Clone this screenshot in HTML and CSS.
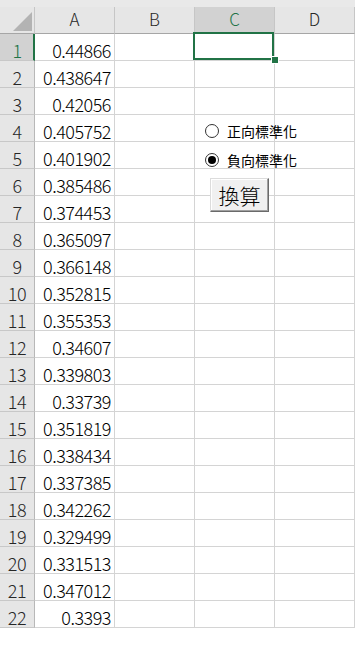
FILE: index.html
```html
<!DOCTYPE html>
<html>
<head>
<meta charset="utf-8">
<link rel="stylesheet" href="styles.css">
</head>
<body>
<div class="sheet">
  <div class="band"></div>
  <div class="grid">
    <div class="corner"><svg width="19" height="19" viewBox="0 0 19 19"><polygon points="19,0 19,19 0,19" fill="#b3b3b3"/></svg></div>
    <div class="colhead">A</div>
    <div class="colhead">B</div>
    <div class="colhead sel">C</div>
    <div class="colhead">D</div>

    <div class="rh sel">1</div><div class="c n">0.44866</div><div class="c"></div><div class="c active"><div class="selbox"><span class="handle"></span></div></div><div class="c"></div>
    <div class="rh">2</div><div class="c n">0.438647</div><div class="c"></div><div class="c"></div><div class="c"></div>
    <div class="rh">3</div><div class="c n">0.42056</div><div class="c"></div><div class="c"></div><div class="c"></div>
    <div class="rh">4</div><div class="c n">0.405752</div><div class="c"></div><div class="c"></div><div class="c"></div>
    <div class="rh">5</div><div class="c n">0.401902</div><div class="c"></div><div class="c"></div><div class="c"></div>
    <div class="rh">6</div><div class="c n">0.385486</div><div class="c"></div><div class="c"></div><div class="c"></div>
    <div class="rh">7</div><div class="c n">0.374453</div><div class="c"></div><div class="c"></div><div class="c"></div>
    <div class="rh">8</div><div class="c n">0.365097</div><div class="c"></div><div class="c"></div><div class="c"></div>
    <div class="rh">9</div><div class="c n">0.366148</div><div class="c"></div><div class="c"></div><div class="c"></div>
    <div class="rh">10</div><div class="c n">0.352815</div><div class="c"></div><div class="c"></div><div class="c"></div>
    <div class="rh">11</div><div class="c n">0.355353</div><div class="c"></div><div class="c"></div><div class="c"></div>
    <div class="rh">12</div><div class="c n">0.34607</div><div class="c"></div><div class="c"></div><div class="c"></div>
    <div class="rh">13</div><div class="c n">0.339803</div><div class="c"></div><div class="c"></div><div class="c"></div>
    <div class="rh">14</div><div class="c n">0.33739</div><div class="c"></div><div class="c"></div><div class="c"></div>
    <div class="rh">15</div><div class="c n">0.351819</div><div class="c"></div><div class="c"></div><div class="c"></div>
    <div class="rh">16</div><div class="c n">0.338434</div><div class="c"></div><div class="c"></div><div class="c"></div>
    <div class="rh">17</div><div class="c n">0.337385</div><div class="c"></div><div class="c"></div><div class="c"></div>
    <div class="rh">18</div><div class="c n">0.342262</div><div class="c"></div><div class="c"></div><div class="c"></div>
    <div class="rh">19</div><div class="c n">0.329499</div><div class="c"></div><div class="c"></div><div class="c"></div>
    <div class="rh">20</div><div class="c n">0.331513</div><div class="c"></div><div class="c"></div><div class="c"></div>
    <div class="rh">21</div><div class="c n">0.347012</div><div class="c"></div><div class="c"></div><div class="c"></div>
    <div class="rh">22</div><div class="c n">0.3393</div><div class="c"></div><div class="c"></div><div class="c"></div>
  </div>

  <div class="controls">
    <div class="radio-row"><span class="radio"></span><span class="rlabel">正向標準化</span></div>
    <div class="radio-row"><span class="radio checked"></span><span class="rlabel">負向標準化</span></div>
    <div class="btn">換算</div>
  </div>
</div>
</body>
</html>
```

FILE: styles.css
```css
html, body {
  margin: 0;
  padding: 0;
  background: #ffffff;
}

.sheet {
  position: relative;
  width: 361px;
  height: 652px;
  font-family: "Noto Sans CJK TC", "Liberation Sans", sans-serif;
  font-weight: 300;
}

.band {
  width: 355px;
  height: 7px;
  background: #e9e9e9;
}

.grid {
  display: grid;
  grid-template-columns: 35px repeat(4, 80px);
  grid-template-rows: 27px repeat(22, 27px);
  width: 355px;
}

.corner {
  background: #e6e6e6;
  border-right: 1px solid #c6c6c6;
  border-bottom: 1px solid #a6a6a6;
  display: flex;
  justify-content: flex-end;
  align-items: flex-end;
  padding: 0 2px 2px 0;
  box-sizing: border-box;
}

.colhead {
  background: #e6e6e6;
  border-right: 1px solid #c6c6c6;
  border-bottom: 1px solid #a6a6a6;
  box-sizing: border-box;
  display: flex;
  justify-content: center;
  align-items: center;
  padding-bottom: 3px;
  font-size: 17px;
  line-height: 18px;
  color: #262626;
}

.colhead.sel {
  background: #d2d2d2;
  color: #217346;
}

.rh {
  background: #e6e6e6;
  border-right: 1px solid #b8b8b8;
  border-bottom: 1px solid #c8c8c8;
  box-sizing: border-box;
  display: flex;
  justify-content: center;
  align-items: flex-end;
  padding-bottom: 1px;
  font-size: 18px;
  line-height: 18px;
  letter-spacing: -0.5px;
  color: #262626;
}

.rh.sel {
  background: #d2d2d2;
  color: #217346;
  border-right: 2px solid #217346;
  padding-left: 1px;
}

.c {
  border-right: 1px solid #d4d4d4;
  border-bottom: 1px solid #d4d4d4;
  box-sizing: border-box;
  display: flex;
  justify-content: flex-end;
  align-items: flex-end;
  padding-right: 3px;
  padding-bottom: 1px;
  font-size: 18px;
  line-height: 18px;
  letter-spacing: -0.5px;
  color: #000;
}

.active {
  position: relative;
}

.selbox {
  position: absolute;
  top: -2px;
  left: -2px;
  right: 0;
  bottom: 0;
  border: 2px solid #217346;
}

.handle {
  position: absolute;
  left: 77px;
  top: 23px;
  width: 6px;
  height: 6px;
  background: #217346;
  box-shadow: 0 0 0 1px #ffffff;
}

.controls {
  position: absolute;
  left: 205px;
  top: 121px;
  display: flex;
  flex-direction: column;
  align-items: flex-start;
  gap: 9px;
}

.radio-row {
  display: flex;
  align-items: center;
  gap: 8px;
  height: 20px;
}

.radio {
  width: 14px;
  height: 14px;
  box-sizing: border-box;
  border: 1px solid #333333;
  border-radius: 50%;
  background: #ffffff;
  display: flex;
  justify-content: center;
  align-items: center;
}

.radio.checked::after {
  content: "";
  width: 8px;
  height: 8px;
  border-radius: 50%;
  background: #000000;
}

.rlabel {
  font-size: 14px;
  font-weight: 400;
  line-height: 20px;
  color: #000;
}

.btn {
  margin-left: 5px;
  margin-top: -1px;
  width: 59px;
  height: 34px;
  box-sizing: border-box;
  background: #f0f0f0;
  border: 1px solid;
  border-color: #dcdcdc #6a6a6a #6a6a6a #dcdcdc;
  box-shadow: inset -1px -1px 0 #a0a0a0, inset 1px 1px 0 #ffffff;
  display: flex;
  justify-content: center;
  align-items: center;
  font-size: 21px;
  font-weight: 300;
  line-height: 24px;
  color: #000;
}
```
